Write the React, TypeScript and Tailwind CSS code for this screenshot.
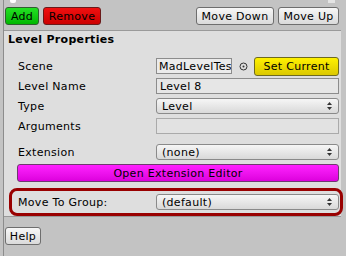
import React from "react";

const font = { fontFamily: '"DejaVu Sans", Verdana, sans-serif' };

function UpDown() {
  return (
    <svg width="5" height="8" viewBox="0 0 5 8" className="shrink-0">
      <path d="M2.5 0 L5 3 L0 3 Z" fill="#333" />
      <path d="M0 5 L5 5 L2.5 8 Z" fill="#333" />
    </svg>
  );
}

function Btn({ label, className }: { label: string; className: string }) {
  return (
    <div
      className={`h-[18px] flex items-center justify-center rounded-[3px] border text-[11px] text-black leading-none tracking-[0.3px] ${className}`}
    >
      {label}
    </div>
  );
}

function Popup({ value }: { value: string }) {
  return (
    <div className="h-[16px] flex-1 flex items-center justify-between pl-[5px] pr-[6px] rounded-[3px] border border-[#8a8a8a] bg-gradient-to-b from-[#f6f6f6] to-[#d9d9d9] text-[11px] text-black leading-none tracking-[0.3px]">
      <span>{value}</span>
      <UpDown />
    </div>
  );
}

function Row({ label, children }: { label: string; children: React.ReactNode }) {
  return (
    <div className="h-[20px] flex items-center">
      <div className="w-[139px] pl-[1px] text-[11px] text-black leading-none tracking-[0.3px]">{label}</div>
      <div className="flex-1 flex items-center">{children}</div>
    </div>
  );
}

export default function App() {
  return (
    <div className="w-[346px] h-[256px] bg-[#c3c3c3] flex overflow-hidden relative" style={font}>
      <div className="absolute left-[10px] top-0 w-[6px] h-[3px] bg-white rounded-b-[2px]" />
      <div className="absolute left-[328px] top-0 w-[7px] h-[3px] bg-[#e4e4e4]" />
      <div className="w-[3px]" />
      <div className="flex-1 flex flex-col border-l border-[#8c8c8c]">
        {/* toolbar */}
        <div className="h-[31px] flex items-start pt-[7px] pl-[1px] pr-[2px] border-b border-[#9a9a9a]">
          <Btn label="Add" className="w-[34px] bg-gradient-to-b from-[#22e022] to-[#00b800] border-[#2f5f2f]" />
          <Btn label="Remove" className="w-[58px] ml-[4px] bg-gradient-to-b from-[#f01010] to-[#cc0000] border-[#6a1a1a]" />
          <div className="flex-1" />
          <Btn label="Move Down" className="w-[78px] bg-gradient-to-b from-[#f7f7f7] to-[#dadada] border-[#6e6e6e]" />
          <Btn label="Move Up" className="w-[61px] ml-[4px] bg-gradient-to-b from-[#f7f7f7] to-[#dadada] border-[#6e6e6e]" />
        </div>
        {/* panel */}
        <div className="h-[186px] bg-[#dedede] border-b border-[#999999] flex flex-col">
          <div className="pl-[4px] pt-[2px] h-[25px] text-[11px] font-bold text-black leading-[14px] tracking-[0.3px]">Level Properties</div>
          <div className="flex flex-col pl-[13px] pr-[2px]">
            <Row label="Scene">
              <div className="w-[76px] h-[16px] flex items-center px-[2px] border border-[#8c8c8c] bg-[#ebebeb] text-[11px] leading-none tracking-[0.3px] overflow-hidden whitespace-nowrap">
                MadLevelTest
              </div>
              <svg width="9" height="9" viewBox="0 0 9 9" className="ml-[7px]">
                <circle cx="4.5" cy="4.5" r="3.5" fill="none" stroke="#333" strokeWidth="1" />
                <circle cx="4.5" cy="4.5" r="1" fill="#333" />
              </svg>
              <div className="flex-1" />
              <Btn label="Set Current" className="w-[85px] h-[19px] bg-gradient-to-b from-[#fff200] to-[#dcc800] border-[#6e6a20]" />
            </Row>
            <Row label="Level Name">
              <div className="flex-1 h-[16px] flex items-center px-[3px] border border-[#8c8c8c] bg-[#e6e6e6] text-[11px] leading-none tracking-[0.3px]">
                Level 8
              </div>
            </Row>
            <Row label="Type">
              <Popup value="Level" />
            </Row>
            <Row label="Arguments">
              <div className="flex-1 h-[16px] border border-[#aaaaaa] bg-[#e2e2e2]" />
            </Row>
            <div className="h-[6px]" />
            <Row label="Extension">
              <Popup value="(none)" />
            </Row>
            <div className="mt-[2px] h-[18px] flex items-center justify-center rounded-[3px] border border-[#6e3a6e] bg-gradient-to-b from-[#ff20ff] to-[#dd00dd] text-[11px] text-black leading-none tracking-[0.3px]">
              Open Extension Editor
            </div>
            <div className="mt-[6px] -ml-[8px] -mr-[4px] h-[28px] pl-[5px] pr-[1px] flex items-center border-[3px] border-[#990000] rounded-[8px]">
              <div className="flex-1 flex items-center">
                <div className="w-[139px] pl-[1px] text-[11px] text-black leading-none tracking-[0.3px]">Move To Group:</div>
                <Popup value="(default)" />
              </div>
            </div>
          </div>
        </div>
        {/* bottom */}
        <div className="pt-[10px] pl-[1px]">
          <Btn label="Help" className="w-[36px] bg-gradient-to-b from-[#f7f7f7] to-[#dadada] border-[#6e6e6e]" />
        </div>
      </div>
      <div className="w-[5px]" />
    </div>
  );
}
